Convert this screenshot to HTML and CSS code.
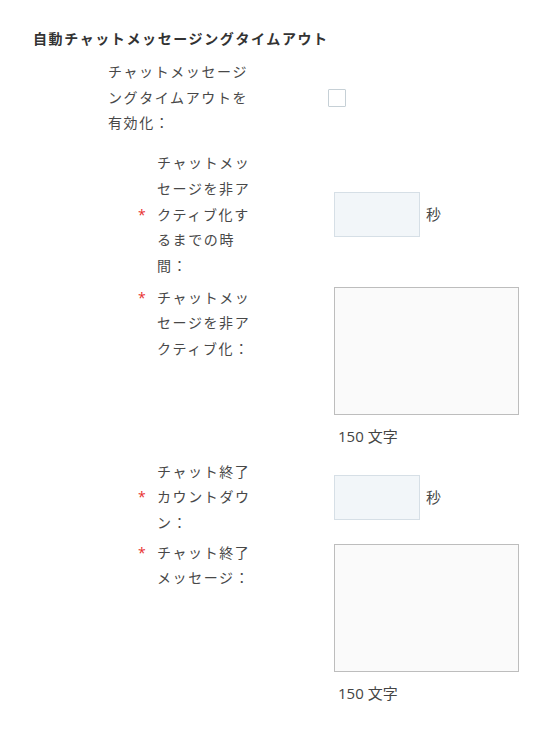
FILE: index.html
```html
<!DOCTYPE html>
<html lang="ja">
<head>
<meta charset="utf-8">
<title>自動チャットメッセージングタイムアウト</title>
<link rel="stylesheet" href="styles.css">
</head>
<body>
<div class="page">
  <h2 class="title">自動チャットメッセージングタイムアウト</h2>
  <div class="form">
    <div class="row row-center row-first">
      <div class="left left-wide">
        <label class="lbl lbl-wide" for="enable">チャットメッセージングタイムアウトを有効化：</label>
      </div>
      <div class="ctrl"><input id="enable" class="check" type="checkbox"></div>
    </div>

    <div class="row row-center row-second">
      <div class="left">
        <span class="req">*</span>
        <label class="lbl" for="idle">チャットメッセージを非アクティブ化するまでの時間：</label>
      </div>
      <div class="ctrl ctrl-inline"><input id="idle" class="num" type="text"><span class="unit">秒</span></div>
    </div>

    <div class="row row-top row-third">
      <div class="left">
        <span class="req">*</span>
        <label class="lbl" for="idlemsg">チャットメッセージを非アクティブ化：</label>
      </div>
      <div class="ctrl ctrl-area">
        <textarea id="idlemsg" class="area"></textarea>
        <div class="count">150 文字</div>
      </div>
    </div>

    <div class="row row-center row-fourth">
      <div class="left">
        <span class="req">*</span>
        <label class="lbl" for="countdown">チャット終了カウントダウン：</label>
      </div>
      <div class="ctrl ctrl-inline"><input id="countdown" class="num" type="text"><span class="unit">秒</span></div>
    </div>

    <div class="row row-top row-fifth">
      <div class="left">
        <span class="req">*</span>
        <label class="lbl" for="endmsg">チャット終了メッセージ：</label>
      </div>
      <div class="ctrl ctrl-area">
        <textarea id="endmsg" class="area"></textarea>
        <div class="count">150 文字</div>
      </div>
    </div>
  </div>
</div>
</body>
</html>
```

FILE: styles.css
```css
html, body {
  margin: 0;
  padding: 0;
  background: #ffffff;
}

body {
  font-family: "Open Sans", "Noto Sans CJK JP", sans-serif;
  font-size: 14px;
  color: #484848;
}

.page {
  padding: 29px 0 0 0;
}

.title {
  margin: 0 0 10px 33px;
  font-size: 14px;
  line-height: 20px;
  font-weight: bold;
  color: #333333;
  letter-spacing: 1.6px;
}

.form {
  display: flex;
  flex-direction: column;
}

.row {
  display: flex;
}

.row-center {
  align-items: center;
}

.row-top {
  align-items: flex-start;
}

.row-second { margin-top: 14px; }
.row-third { margin-top: 6px; }
.row-fourth { margin-top: 13px; }
.row-fifth { margin-top: 4px; }

.left {
  width: 334px;
  flex: none;
  box-sizing: border-box;
  padding-left: 135px;
  display: flex;
  align-items: center;
}

.row-top .left {
  align-items: flex-start;
}

.left-wide {
  padding-left: 108px;
}

.req {
  width: 22px;
  flex: none;
  box-sizing: border-box;
  padding-left: 3px;
  color: #e8322f;
  font-size: 14px;
  line-height: 25.7px;
}

.lbl {
  display: block;
  width: 100px;
  line-height: 25.7px;
  letter-spacing: 1.6px;
  color: #484848;
}

.lbl-wide {
  width: 150px;
}

.ctrl {
  display: flex;
}

.ctrl-inline {
  align-items: center;
}

.ctrl-area {
  flex-direction: column;
}

.check {
  appearance: none;
  -webkit-appearance: none;
  margin: 0 0 0 -6px;
  width: 18px;
  height: 18px;
  border: 1px solid #c6d0d6;
  border-radius: 1px;
  background: #ffffff;
  box-sizing: border-box;
}

.num {
  width: 86px;
  height: 45px;
  box-sizing: border-box;
  margin: 0;
  border: 1px solid #d6dfe6;
  background: #f2f6f9;
  font-family: inherit;
  font-size: 14px;
  padding: 0 6px;
}

.unit {
  margin-left: 6px;
  font-size: 15px;
  color: #484848;
  line-height: 20px;
}

.area {
  display: block;
  width: 185px;
  height: 128px;
  box-sizing: border-box;
  margin: 0;
  border: 1px solid #bdbdbd;
  background: #fafafa;
  resize: none;
  font-family: inherit;
  font-size: 14px;
}

.row-third .area { margin-top: 2px; }
.row-fifth .area { margin-top: 4px; }

.count {
  margin-top: 11px;
  padding-left: 4px;
  font-size: 15px;
  line-height: 20px;
  color: #444444;
}
```
